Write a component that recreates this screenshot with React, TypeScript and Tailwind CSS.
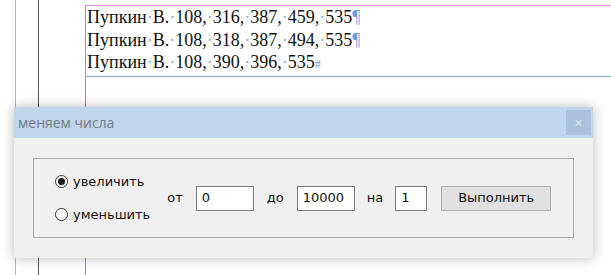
const lines = [
  { parts: ['Пупкин', 'В.', '108,', '316,', '387,', '459,', '535'], end: '¶' },
  { parts: ['Пупкин', 'В.', '108,', '318,', '387,', '494,', '535'], end: '¶' },
  { parts: ['Пупкин', 'В.', '108,', '390,', '396,', '535'], end: '#' },
];

function TextLine({ parts, end }: { parts: string[]; end: string }) {
  return (
    <div className="h-[22.5px] whitespace-nowrap leading-[22px]">
      {parts.map((p, i) => (
        <span key={i}>
          {p}
          {i < parts.length - 1 && <span className="text-[#8fb0e0]">·</span>}
        </span>
      ))}
      <span className={end === '#' ? 'text-[12px] text-[#6a9be0]' : 'text-[#6a9be0]'}>{end}</span>
    </div>
  );
}

function Radio({ checked, label }: { checked?: boolean; label: string }) {
  return (
    <label className="flex items-center gap-[5px]">
      <span className="flex h-[13px] w-[13px] items-center justify-center rounded-full border border-[#333] bg-white">
        {checked && <span className="h-[7px] w-[7px] rounded-full bg-[#1a1a1a]" />}
      </span>
      <span>{label}</span>
    </label>
  );
}

function Field({ value, w }: { value: string; w: string }) {
  return (
    <div className={`flex h-[25px] items-center border border-[#7a7a7a] bg-white pl-[5px] ${w}`}>
      {value}
    </div>
  );
}

export default function App() {
  return (
    <div className="relative h-[275px] w-[611px] overflow-hidden bg-white">
      {/* document page */}
      <div className="flex h-full">
        <div className="w-[15px]" />
        <div className="w-[23px] border-l border-[#f29cab]" />
        <div className="w-[47px] border-l border-[#555]" />
        <div className="mt-[5px] flex-1 border-l border-t border-l-[#b47ef0] border-t-[#ea8ee8]">
          <div className="h-[71px] border-b border-[#86abe6] pl-[1px] font-['Liberation_Serif',serif] text-[18px] text-[#111]">
            {lines.map((l, i) => (
              <TextLine key={i} parts={l.parts} end={l.end} />
            ))}
          </div>
        </div>
      </div>

      {/* dialog */}
      <div className="absolute left-[14px] top-[107px] flex h-[151px] w-[579px] flex-col bg-[#f0f0f0] shadow-[0_0_12px_rgba(0,0,0,0.28)]">
        <div className="flex h-[31px] items-center justify-between bg-[#c0d6ec] pl-[4px] pr-[2px]">
          <span className="font-['Open_Sans',sans-serif] text-[14px] text-[#6f7a86]">меняем числа</span>
          <div className="flex h-[25px] w-[25px] items-center justify-center bg-[#abc2dc] text-[14px] font-bold leading-none text-[#d8e3ef]">
            ×
          </div>
        </div>
        <div className="flex-1 px-[19px] pb-[20px] pt-[20px]">
          <div className="flex h-full items-center border border-[#a9a9a9] pl-[21px] font-['DejaVu_Sans',sans-serif] text-[13px] text-[#111]">
            <div className="flex flex-col gap-[14px]">
              <Radio checked label="увеличить" />
              <Radio label="уменьшить" />
            </div>
            <span className="ml-[17px]">от</span>
            <div className="ml-[13px]">
              <Field value="0" w="w-[58px]" />
            </div>
            <span className="ml-[13px]">до</span>
            <div className="ml-[13px]">
              <Field value="10000" w="w-[58px]" />
            </div>
            <span className="ml-[12px]">на</span>
            <div className="ml-[12px]">
              <Field value="1" w="w-[32px]" />
            </div>
            <button className="ml-[14px] h-[25px] w-[110px] border border-[#adadad] bg-[#e1e1e1]">Выполнить</button>
          </div>
        </div>
      </div>
    </div>
  );
}
